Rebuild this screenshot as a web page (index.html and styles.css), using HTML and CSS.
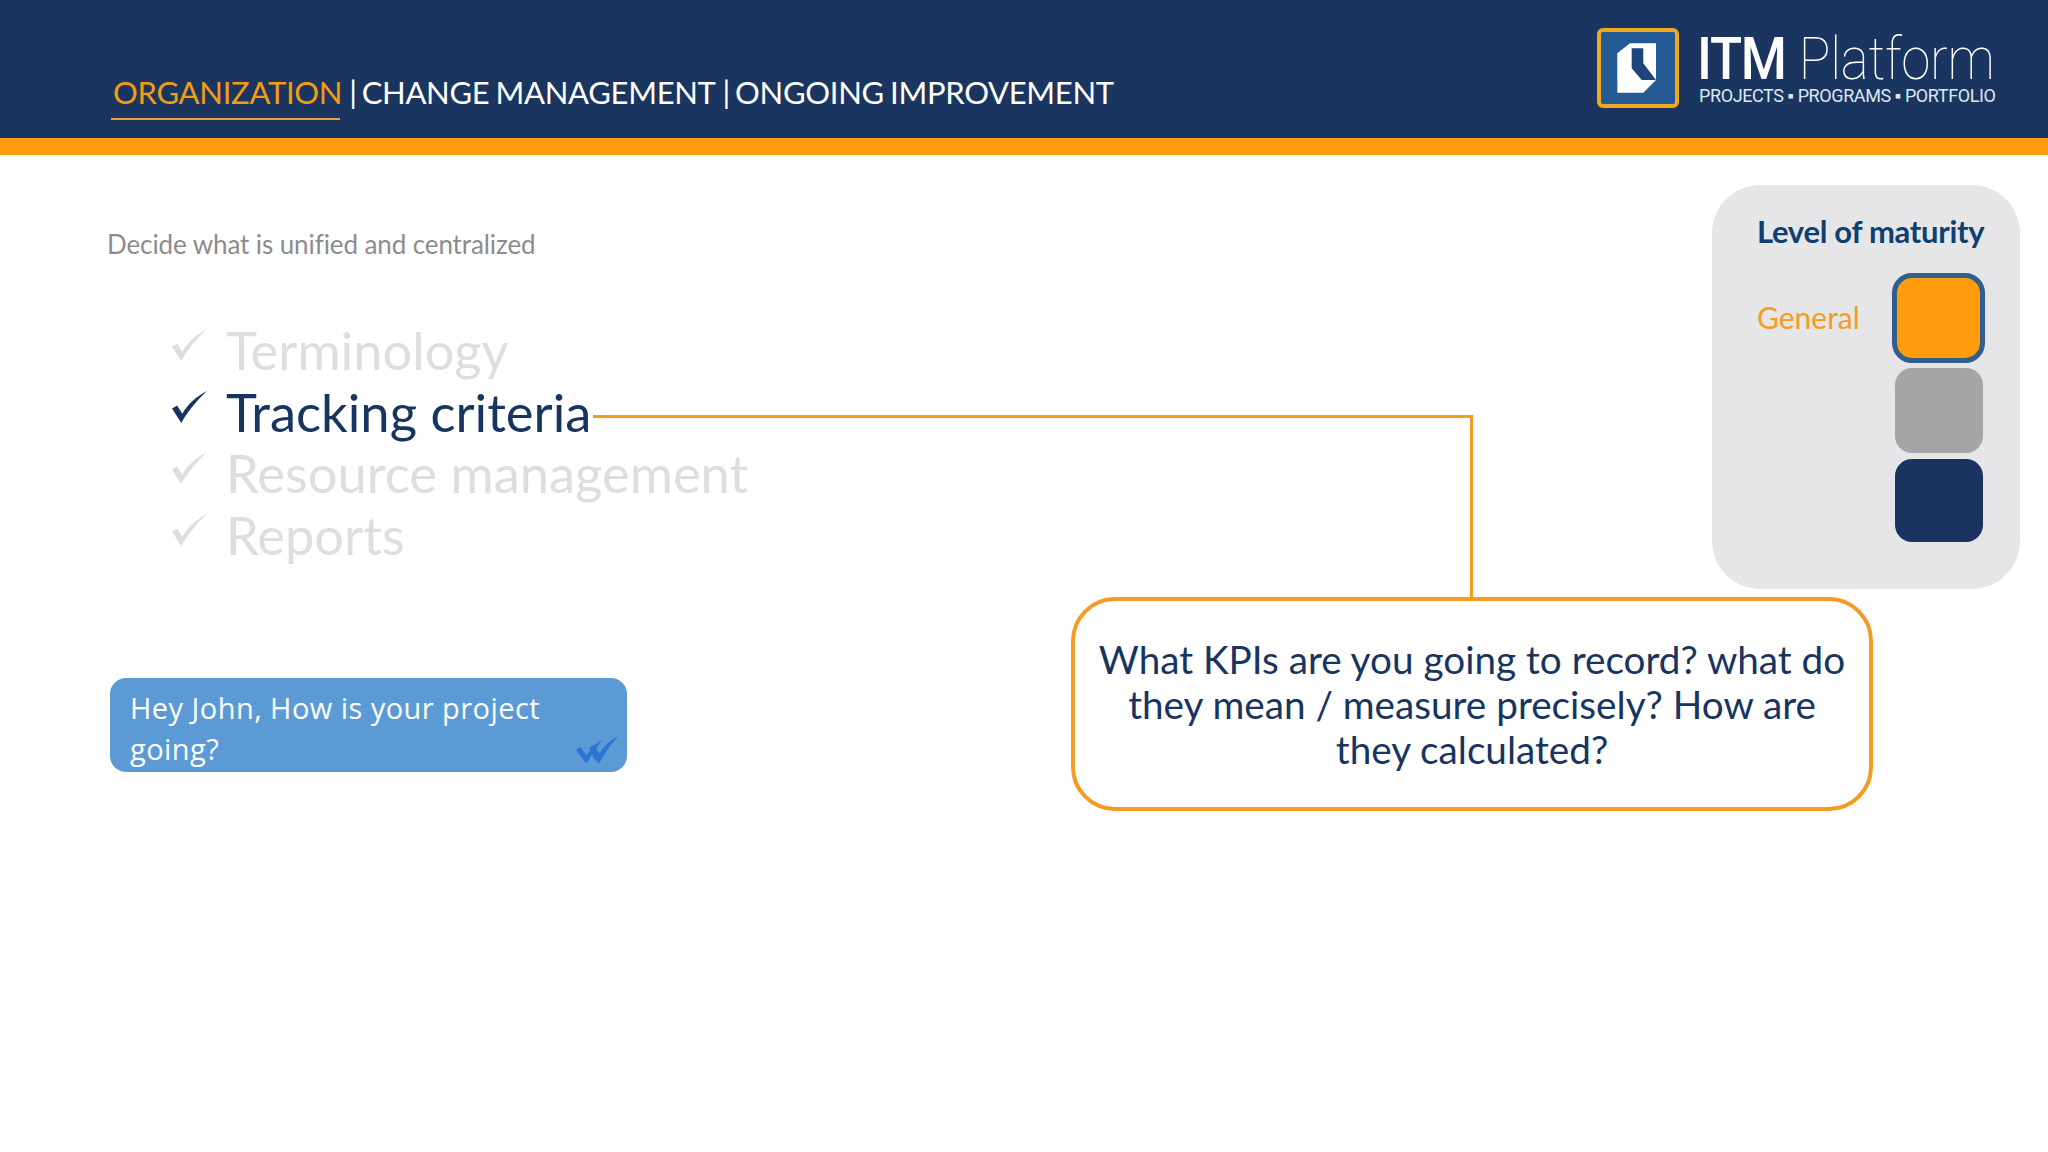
FILE: index.html
```html
<!DOCTYPE html>
<html lang="en">
<head>
<meta charset="utf-8">
<title>ITM Platform - Organization</title>
<link rel="stylesheet" href="styles.css">
</head>
<body>
<div class="slide">
  <header class="header">
    <nav class="crumbs">
      <span class="crumb-active">ORGANIZATION</span><span class="crumb-sep">|</span><span>CHANGE MANAGEMENT</span><span class="crumb-sep">|</span><span>ONGOING IMPROVEMENT</span>
    </nav>
    <div class="logo">
      <svg class="logo-icon" viewBox="0 0 82 80" aria-hidden="true">
        <rect x="2" y="2" width="78" height="76" rx="4" fill="#245a94" stroke="#f0a81e" stroke-width="4"/>
        <polygon points="20.3,25.3 33,15.3 59,15.3 59,52 46.3,64.7 20.3,64.7" fill="#fff"/>
        <polygon points="34.7,20.3 46.3,20.3 46.3,35.3 59,52 44.7,52 34.7,40.3" fill="#1c4679"/>
      </svg>
      <div class="logo-text">
        <div class="logo-name"><span class="logo-itm">ITM</span><span class="logo-platform">Platform</span></div>
        <div class="logo-tag">PROJECTS ▪ PROGRAMS ▪ PORTFOLIO</div>
      </div>
    </div>
  </header>
  <div class="stripe"></div>
  <main class="content">
    <section class="left">
      <p class="subtitle">Decide what is unified and centralized</p>
      <ul class="checklist">
        <li class="check-item">
          <svg class="check" viewBox="0 0 34 32" aria-hidden="true"><path d="M0 17 L5 14 L10 22 C15 13 24 5 34 0 C25 8 16 19 9 31 Z"/></svg>
          <span>Terminology</span>
        </li>
        <li class="check-item is-active">
          <svg class="check" viewBox="0 0 34 32" aria-hidden="true"><path d="M0 17 L5 14 L10 22 C15 13 24 5 34 0 C25 8 16 19 9 31 Z"/></svg>
          <span>Tracking criteria</span>
        </li>
        <li class="check-item">
          <svg class="check" viewBox="0 0 34 32" aria-hidden="true"><path d="M0 17 L5 14 L10 22 C15 13 24 5 34 0 C25 8 16 19 9 31 Z"/></svg>
          <span>Resource management</span>
        </li>
        <li class="check-item">
          <svg class="check" viewBox="0 0 34 32" aria-hidden="true"><path d="M0 17 L5 14 L10 22 C15 13 24 5 34 0 C25 8 16 19 9 31 Z"/></svg>
          <span>Reports</span>
        </li>
      </ul>
      <div class="bubble">
        <p class="bubble-text">Hey John, How is your project going?</p>
        <svg class="ticks" viewBox="0 0 40 26" aria-hidden="true">
          <path d="M0 13 L4 10 L10 18 C15 11 20 6 25 3 C21 9 15 17 10 26 Z"/>
          <path d="M13 11 L17 8 L22 16 C27 9 33 4 40 0 C34 7 27 16 22 26 L17 21 Z"/>
        </svg>
      </div>
    </section>
    <section class="right">
      <aside class="panel">
        <h2 class="panel-title">Level of maturity</h2>
        <div class="panel-body">
          <span class="panel-label">General</span>
          <div class="swatches">
            <div class="swatch swatch-orange"></div>
            <div class="swatch swatch-gray"></div>
            <div class="swatch swatch-navy"></div>
          </div>
        </div>
      </aside>
      <div class="callout">
        <p>What KPIs are you going to record? what do they mean / measure precisely? How are they calculated?</p>
      </div>
    </section>
    <div class="connector"></div>
  </main>
</div>
</body>
</html>
```
FILE: styles.css
```css
* { box-sizing: border-box; }
html, body { margin: 0; padding: 0; background: #fff; }
body { font-family: Lato, "Open Sans", sans-serif; }
.slide { width: 2048px; height: 1152px; overflow: hidden; display: flex; flex-direction: column; }

.header {
  height: 138px; flex: none; background: #1a3560;
  display: flex; justify-content: space-between; align-items: flex-start;
  padding: 28px 55px 0 111px;
}
.crumbs {
  margin-top: 44px; height: 48px; line-height: 40px;
  font-size: 31px; color: #fff; white-space: nowrap; letter-spacing: -0.3px; word-spacing: -1.5px;
}
.crumb-active {
  position: relative; display: inline-block; height: 48px; padding-left: 2px;
  color: #f39c12;
}
.crumb-active::after {
  content: ""; position: absolute; left: 0; bottom: 0; width: 229px; height: 2px; background: #e3a73c;
}
.crumb-sep { margin: 0 5px 0 7px; }

.logo { display: flex; gap: 18px; }
.logo-icon { width: 82px; height: 80px; flex: none; }
.logo-text { color: #fff; width: 296px; }
.logo-name {
  display: flex; gap: 15px; height: 58px; line-height: 62px; white-space: nowrap;
  font-family: Roboto, sans-serif; font-size: 60px;
  transform: scaleX(0.88); transform-origin: left center;
}
.logo-itm { font-weight: 500; letter-spacing: -1.5px; }
.logo-platform { font-weight: 100; letter-spacing: -0.3px; color: #fff; }
.logo-tag {
  font-family: Roboto, sans-serif; font-size: 18px; line-height: 20px; white-space: nowrap;
  color: #dfe8f1; letter-spacing: -0.4px; padding-left: 2px;
}

.stripe { height: 17px; flex: none; background: #ff9c0d; }

.content { position: relative; flex: 1; display: flex; justify-content: space-between; }
.left { padding: 73px 0 0 107px; }
.subtitle { margin: 0; font-size: 26px; line-height: 32px; color: #8c8c90; white-space: nowrap; letter-spacing: -0.1px; }
.checklist { list-style: none; margin: 59px 0 0; padding: 0 0 0 65px; }
.check-item {
  display: flex; align-items: flex-start; gap: 19px; height: 61.7px;
  font-size: 52.5px; line-height: 61px; color: #dddee2; white-space: nowrap;
}
.check-item.is-active { color: #17355f; }
.check { width: 35px; height: 33px; flex: none; margin-top: 10px; fill: currentColor; }

.bubble {
  position: relative; width: 517px; height: 94px; margin: 112px 0 0 3px;
  padding: 9px 40px 0 20px; background: #5b9ad5; border-radius: 16px;
}
.bubble-text {
  margin: 0; color: #fff; font-family: "Open Sans", sans-serif;
  font-size: 29px; line-height: 41px; letter-spacing: 0.45px;
}
.ticks { position: absolute; right: 9px; bottom: 8px; width: 42px; height: 28px; fill: #2a74d2; }

.right { display: flex; flex-direction: column; align-items: flex-end; padding: 30px 28px 0 0; }
.panel {
  width: 308px; height: 404px; padding: 27px 26px 0 45px;
  background: #e6e6e8; border-radius: 48px;
}
.panel-title {
  margin: 0; font-size: 31px; line-height: 38px; font-weight: 700; color: #0f3f70;
  white-space: nowrap; letter-spacing: -0.3px;
}
.panel-body { display: flex; justify-content: space-between; margin-top: 23px; }
.panel-label { font-size: 30px; line-height: 36px; color: #f39c1f; margin-top: 26px; }
.swatches { display: flex; flex-direction: column; align-items: center; gap: 5px; margin-right: 9px; }
.swatch { width: 88px; height: 85px; border-radius: 17px; }
.swatch-orange { width: 93px; height: 90px; background: #ff9c0d; border: 5px solid #2f5e8f; border-radius: 20px; }
.swatch-gray { background: #a5a4a6; }
.swatch-navy { background: #1a3360; height: 83px; margin-top: 1px; }

.callout {
  width: 802px; height: 214px; margin: 8px 147px 0 0; padding: 36px 20px 0;
  background: #fff; border: 4px solid #f39c1f; border-radius: 44px;
  text-align: center; font-size: 38.7px; line-height: 45px; color: #17355f;
}
.callout p { margin: 0; }

.connector {
  position: absolute; left: 593px; top: 260px; width: 880px; height: 183px;
  border-top: 3px solid #f39c1f; border-right: 3px solid #f39c1f;
}
```
